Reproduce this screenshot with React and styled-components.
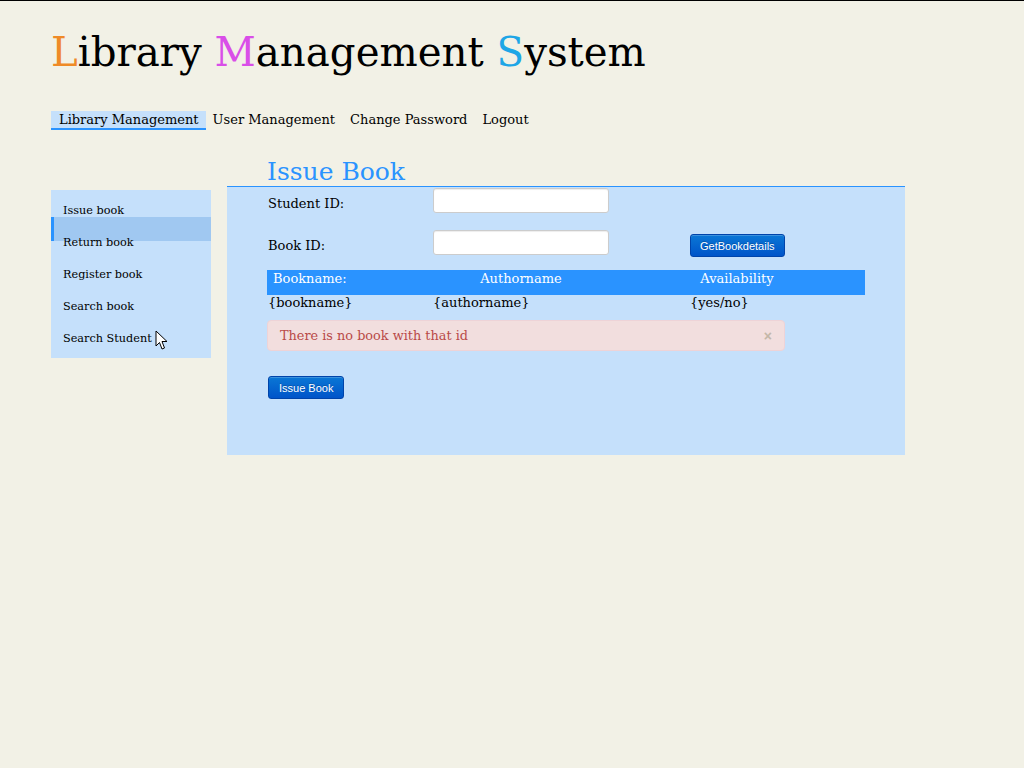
import React from "react";
import styled, { createGlobalStyle } from "styled-components";

const Global = createGlobalStyle`
  html, body { margin: 0; padding: 0; }
  body {
    background: #f2f1e6;
    border-top: 1px solid #000;
    font-family: "DejaVu Serif", serif;
    color: #000;
    min-height: 767px;
  }
`;

const Page = styled.div`
  padding: 28px 0 0 51px;
  position: relative;
`;

const Title = styled.h1`
  margin: 0;
  font-weight: normal;
  font-size: 40.3px;
  line-height: 48px;
`;

const Initial = styled.span`
  color: ${(p) => p.$c};
`;

const Nav = styled.nav`
  display: flex;
  margin-top: 34px;
`;

const NavItem = styled.div`
  font-size: 13px;
  line-height: 17px;
  padding: ${(p) => (p.$active ? "0 7px 0 8px" : "0 8px 0 7px")};
  height: 17px;
  background: ${(p) => (p.$active ? "#c5e0fb" : "transparent")};
  border-bottom: 2px solid ${(p) => (p.$active ? "#2a93ff" : "transparent")};
`;

const Body = styled.div`
  display: flex;
  align-items: flex-start;
  margin-top: 27px;
`;

const Sidebar = styled.ul`
  list-style: none;
  margin: 33px 0 0 0;
  padding: 5px 0 3px;
  width: 160px;
  background: #c5e0fb;
  position: relative;
`;

const SideItem = styled.li`
  font-size: 11.25px;
  line-height: 32px;
  height: 32px;
  padding-left: 12px;
`;

const Highlight = styled.div`
  position: absolute;
  left: 0;
  top: 27px;
  width: 160px;
  height: 24px;
  background: #a0c8f1;
  border-left: 3px solid #2a93ff;
  box-sizing: border-box;
`;

const SideText = styled.span`
  position: relative;
`;

const Main = styled.div`
  margin-left: 16px;
  width: 678px;
`;

const Heading = styled.h2`
  margin: 0 0 0 40px;
  font-weight: normal;
  font-size: 25px;
  line-height: 29px;
  color: #2a93ff;
`;

const Panel = styled.div`
  background: #c5e0fb;
  border-top: 1px solid #2a93ff;
  height: 269px;
  padding: 1px 0 0 40px;
  box-sizing: border-box;
`;

const FormRow = styled.div`
  display: grid;
  grid-template-columns: 166px 257px auto;
  grid-template-rows: 25px;
  align-items: start;
  height: 25px;
  margin-bottom: ${(p) => p.$mb || 0}px;
`;

const Label = styled.label`
  font-size: 13px;
  line-height: 15px;
  padding-left: 1px;
  padding-top: 8px;
`;

const Input = styled.input`
  width: 176px;
  height: 25px;
  box-sizing: border-box;
  border: 1px solid #cccccc;
  border-radius: 3px;
  background: #fff;
  box-shadow: inset 0 1px 1px rgba(0, 0, 0, 0.075);
  padding: 0 6px;
`;

const Button = styled.button`
  font-family: "Liberation Sans", Arial, sans-serif;
  font-size: 11px;
  color: #fff;
  height: 23px;
  padding: 0 ${(p) => p.$px || 10}px;
  margin-top: ${(p) => p.$mt || 0}px;
  border: 1px solid #0044aa;
  border-radius: 3px;
  background: linear-gradient(to bottom, #0a77d5, #0054c9);
  box-shadow: inset 0 1px 0 rgba(255, 255, 255, 0.2);
  cursor: pointer;
  justify-self: start;
  text-shadow: 0 -1px 0 rgba(0, 0, 0, 0.2);
`;

const Table = styled.div`
  width: 598px;
  margin-top: 15px;
`;

const Row = styled.div`
  display: grid;
  grid-template-columns: 166px 176px 256px;
  height: ${(p) => (p.$head ? 25 : 24)}px;
  background: ${(p) => (p.$head ? "#2a93ff" : "transparent")};
  color: ${(p) => (p.$head ? "#fff" : "#000")};
  font-size: 13px;
  line-height: ${(p) => (p.$head ? 18 : 15)}px;
  box-sizing: border-box;
`;

const Cell = styled.div`
  text-align: ${(p) => p.$align || "left"};
  padding-left: ${(p) => p.$pl || 0}px;
`;

const Alert = styled.div`
  width: 518px;
  height: 31px;
  box-sizing: border-box;
  margin-top: 1px;
  background: #f2dede;
  border: 1px solid #eed3d7;
  border-radius: 4px;
  color: #b94a48;
  font-size: 12.85px;
  display: flex;
  align-items: center;
  justify-content: space-between;
  padding: 0 12px;
`;

const Close = styled.span`
  font-family: "Liberation Sans", Arial, sans-serif;
  font-weight: bold;
  font-size: 14px;
  color: #c4b7a8;
`;

const IssueRow = styled.div`
  margin-top: 25px;
  padding-left: 1px;
`;

const Cursor = styled.svg`
  position: absolute;
  left: 155px;
  top: 329px;
`;

export default function App() {
  return (
    <>
      <Global />
      <Page>
        <Title>
          <Initial $c="#ef8a27">L</Initial>ibrary{" "}
          <Initial $c="#d94ee8">M</Initial>anagement{" "}
          <Initial $c="#1ea6e6">S</Initial>ystem
        </Title>
        <Nav>
          <NavItem $active>Library Management</NavItem>
          <NavItem>User Management</NavItem>
          <NavItem>Change Password</NavItem>
          <NavItem>Logout</NavItem>
        </Nav>
        <Body>
          <Sidebar>
            <Highlight />
            {["Issue book", "Return book", "Register book", "Search book", "Search Student"].map((t) => (
              <SideItem key={t}>
                <SideText>{t}</SideText>
              </SideItem>
            ))}
          </Sidebar>
          <Main>
            <Heading>Issue Book</Heading>
            <Panel>
              <FormRow $mb={17}>
                <Label>Student ID:</Label>
                <Input />
              </FormRow>
              <FormRow>
                <Label>Book ID:</Label>
                <Input />
                <Button $px={9} $mt={4}>GetBookdetails</Button>
              </FormRow>
              <Table>
                <Row $head>
                  <Cell $pl={6}>Bookname:</Cell>
                  <Cell $align="center">Authorname</Cell>
                  <Cell $align="center">Availability</Cell>
                </Row>
                <Row>
                  <Cell $pl={1}>{"{bookname}"}</Cell>
                  <Cell>{"{authorname}"}</Cell>
                  <Cell $pl={81}>{"{yes/no}"}</Cell>
                </Row>
              </Table>
              <Alert>
                <span>There is no book with that id</span>
                <Close>×</Close>
              </Alert>
              <IssueRow>
                <Button $px={10}>Issue Book</Button>
              </IssueRow>
            </Panel>
          </Main>
        </Body>
        <Cursor width="13" height="21" viewBox="0 0 13 21">
          <path d="M1 1 L1 16 L4.5 12.5 L7 19 L9.5 18 L7 11.5 L12 11.5 Z" fill="#fff" stroke="#000" strokeWidth="1" strokeLinejoin="round" />
        </Cursor>
      </Page>
    </>
  );
}
